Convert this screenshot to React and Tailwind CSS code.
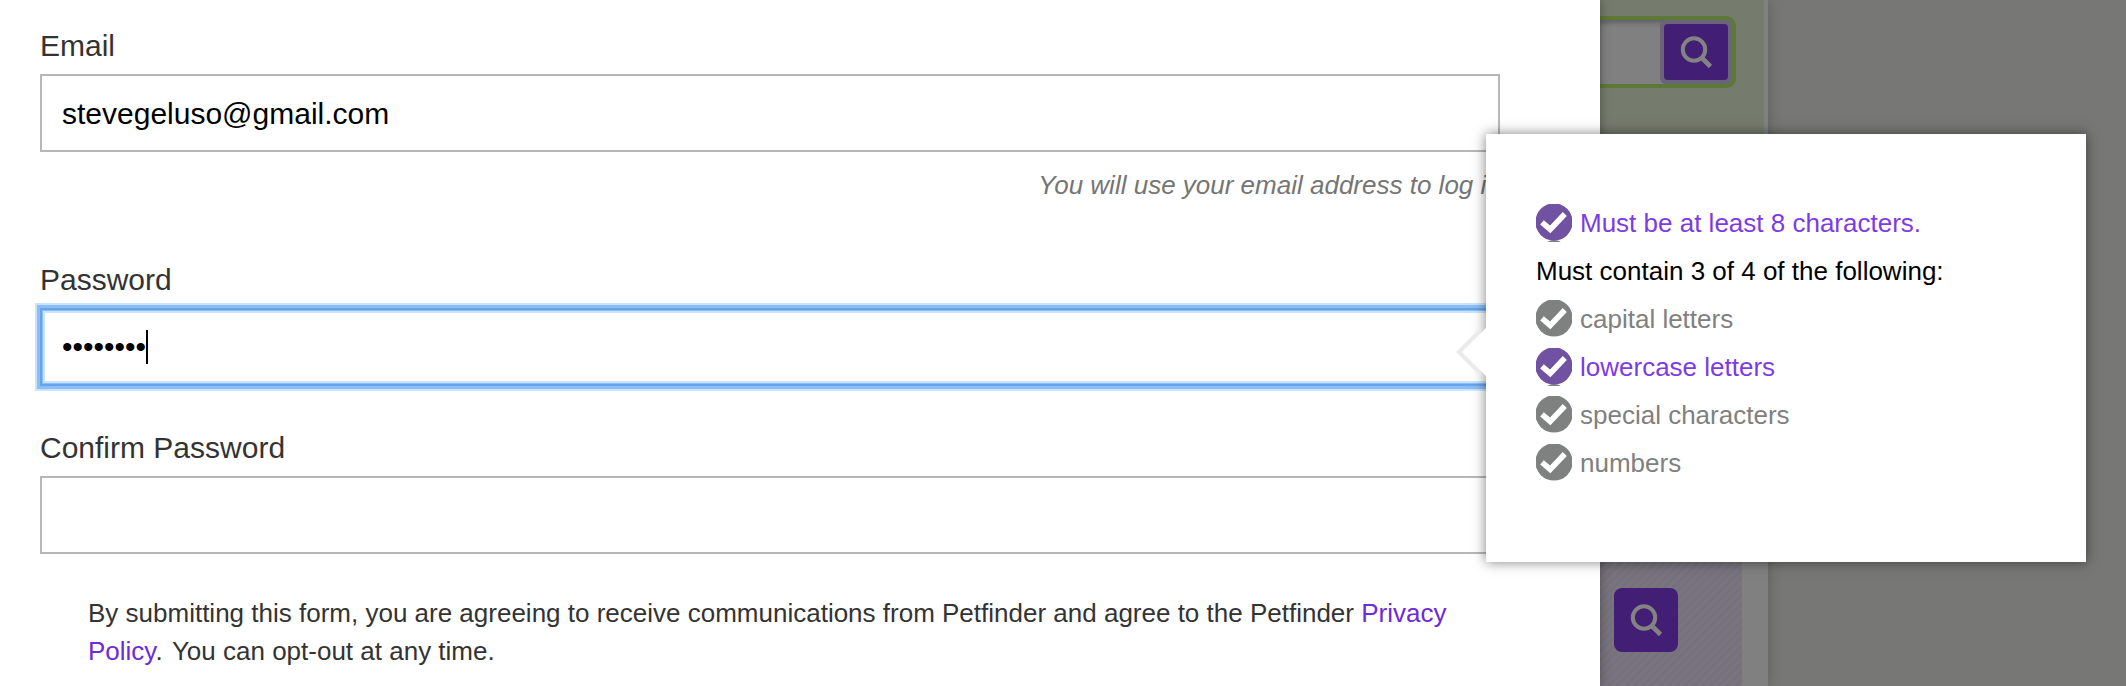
const label = "block text-[30px] leading-[40px] text-[#333333] mb-2";
const field = "flex items-center h-[78px] border-2 border-[#b7b7b7] bg-white pl-5 text-[30px] text-black";

function Search({ className }) {
  return (
    <div className={"flex items-center justify-center bg-[#421f74] " + className}>
      <svg width="36" height="36" viewBox="0 0 36 36" fill="none" stroke="#848384">
        <circle cx="16" cy="15.5" r="11.2" strokeWidth="4" />
        <path d="M24 24L32.5 32.5" strokeWidth="4.6" />
      </svg>
    </div>
  );
}

function Rule({ met, children }) {
  return (
    <li className={"flex items-center h-12 gap-2 " + (met ? "text-[#7d3be6]" : "text-[#808080]")}>
      <svg width="36" height="38" viewBox="0 0 36 38" className="mt-0.5">
        {met && <path d="M11 38Q18 34 25 38Z" fill="#808080" />}
        <circle cx="18" cy="18" r="18.6" fill={met ? "#7152a2" : "#7f8180"} />
        <path d="M6 18.4L14.2 25.4L28.8 10" fill="none" stroke="#fff" strokeWidth="5.6" />
      </svg>
      <span className="pt-0.5">{children}</span>
    </li>
  );
}

export default function App() {
  return (
    <div className="relative flex w-[2126px] h-[686px] overflow-hidden bg-[#777775] font-['Liberation_Sans',Arial,sans-serif]">
      <main className="relative z-10 w-[1600px] shrink-0 bg-white pl-10 pr-[100px] pt-[26px] shadow-[0_0_10px_rgba(0,0,0,0.35)]">
        <label className={label}>Email</label>
        <div className={field}>stevegeluso@gmail.com</div>
        <p className="mt-3.5 -mr-2 h-[38px] text-right text-[26px] leading-[38px] italic text-[#757575] whitespace-nowrap">
          You will use your email address to log in.
        </p>
        <div className="mt-14">
          <label className={label}>Password</label>
          <div className="flex items-center h-[78px] border-2 border-[#69a3e6] bg-white pl-5 shadow-[0_0_0_3px_#8abefa,0_0_0_5px_#cbe4fd,inset_0_0_0_1px_#8abefa,inset_0_0_0_3px_#cbe4fd]">
            <span className="text-[30px] leading-[40px]">••••••••</span>
            <span className="h-[34px] w-0.5 bg-black" />
          </div>
        </div>
        <div className="mt-[42px]">
          <label className={label}>Confirm Password</label>
          <div className={field} />
        </div>
        <p className="mt-10 ml-12 text-[26px] leading-[38px] text-[#333333] whitespace-nowrap">
          By submitting this form, you are agreeing to receive communications from Petfinder and agree to the Petfinder{" "}
          <a className="text-[#6e2bd9]">Privacy<br />Policy</a>. <span className="ml-0.5">You can opt-out at any time.</span>
        </p>
      </main>

      <aside className="flex w-[168px] shrink-0 flex-col bg-[#808080] shadow-[0_0_14px_rgba(0,0,0,0.22)]">
        <div className="h-[340px] w-[164px] bg-[#757b6d] pt-4">
          <div className="flex h-[72px] w-[136px] justify-end rounded-r-[10px] border-y-4 border-r-4 border-[#5d7937] bg-[#808080] shadow-[inset_0_4px_5px_-1px_rgba(0,0,0,0.25)]">
            <div className="h-16 w-[72px] rounded-md bg-[#6a637a] p-1">
              <Search className="h-14 w-16 rounded" />
            </div>
          </div>
        </div>
        <div className="w-[142px] grow bg-[#77737e] bg-[repeating-linear-gradient(135deg,#7a7482_0_3px,#757379_3px_6px)] pl-3.5 pt-[248px]">
          <Search className="h-16 w-16 rounded-lg" />
        </div>
      </aside>

      <section className="absolute z-20 left-[1486px] top-[134px] h-[428px] w-[600px] bg-white pl-[50px] pt-[64px] text-[26px] shadow-[0_0_12px_rgba(0,0,0,0.5)]">
        <ul>
          <Rule met>Must be at least 8 characters.</Rule>
          <li className="flex h-12 items-center pt-0.5 text-black">Must contain 3 of 4 of the following:</li>
          <Rule>capital letters</Rule>
          <Rule met>lowercase letters</Rule>
          <Rule>special characters</Rule>
          <Rule>numbers</Rule>
        </ul>
        <svg className="absolute -left-[30px] top-[190px]" width="32" height="56" viewBox="0 0 32 56">
          <path d="M0 28L24 4V52Z" fill="#ebebeb" />
          <path d="M6 28L30 4H32V52H30Z" fill="#fff" />
        </svg>
      </section>
    </div>
  );
}
